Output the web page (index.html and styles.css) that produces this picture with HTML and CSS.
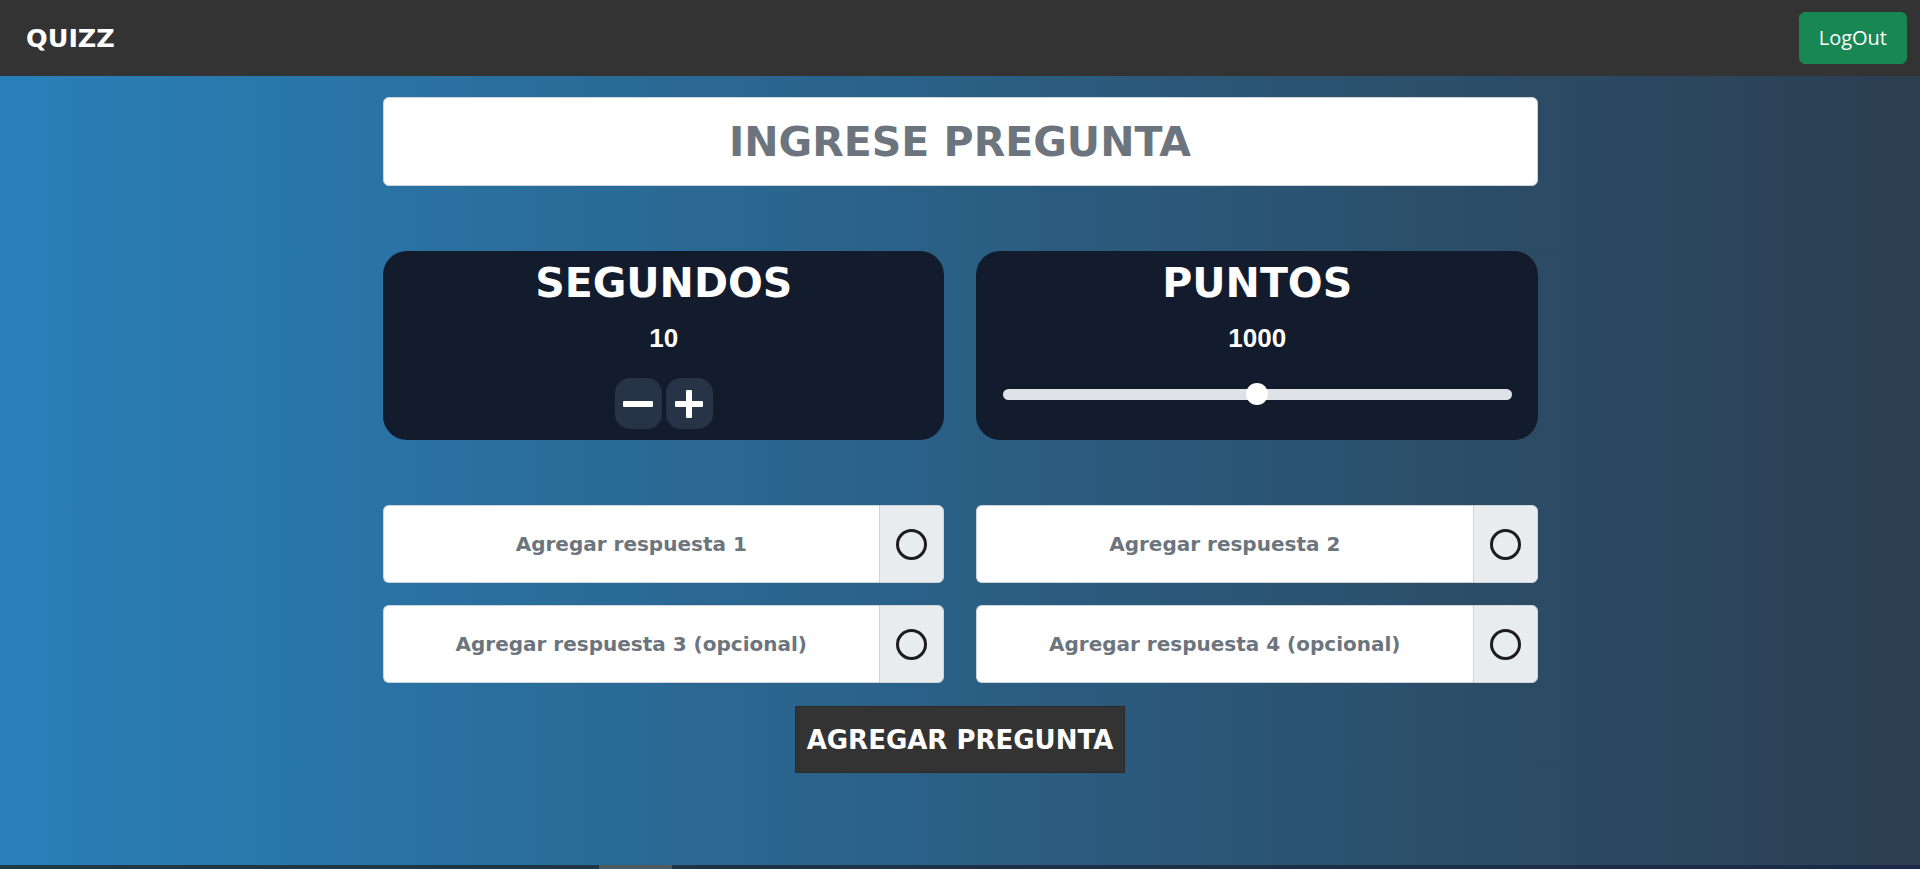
FILE: index.html
```html
<!DOCTYPE html>
<html lang="es">
<head>
    <meta charset="UTF-8">
    <meta name="viewport" content="width=device-width, initial-scale=1.0">
    <title>Quizz</title>
    <link rel="stylesheet" href="styles.css">
</head>
<body>
    <nav class="navbar">
        <span class="brand">QUIZZ</span>
        <button class="btn-logout">LogOut</button>
    </nav>

    <main class="main">
        <div class="container">
            <input type="text" class="question-input" placeholder="INGRESE PREGUNTA">

            <div class="settings">
                <div class="setting-card">
                    <h2 class="setting-title">SEGUNDOS</h2>
                    <div class="setting-value">10</div>
                    <div class="stepper">
                        <button class="step-btn" aria-label="menos">
                            <svg width="30" height="6" viewBox="0 0 30 6"><rect x="0" y="0" width="30" height="6" rx="1" fill="#fff"/></svg>
                        </button>
                        <button class="step-btn" aria-label="mas">
                            <svg width="28" height="28" viewBox="0 0 28 28"><rect x="0" y="11" width="28" height="6" rx="1" fill="#fff"/><rect x="11" y="0" width="6" height="28" rx="1" fill="#fff"/></svg>
                        </button>
                    </div>
                </div>
                <div class="setting-card">
                    <h2 class="setting-title">PUNTOS</h2>
                    <div class="setting-value">1000</div>
                    <input type="range" class="points-range" min="0" max="2000" step="100" value="1000">
                </div>
            </div>

            <div class="answers">
                <div class="answer">
                    <input type="text" class="answer-input" placeholder="Agregar respuesta 1">
                    <div class="answer-check"><input type="radio" name="correcta" class="answer-radio"></div>
                </div>
                <div class="answer">
                    <input type="text" class="answer-input" placeholder="Agregar respuesta 2">
                    <div class="answer-check"><input type="radio" name="correcta" class="answer-radio"></div>
                </div>
                <div class="answer">
                    <input type="text" class="answer-input" placeholder="Agregar respuesta 3 (opcional)">
                    <div class="answer-check"><input type="radio" name="correcta" class="answer-radio"></div>
                </div>
                <div class="answer">
                    <input type="text" class="answer-input" placeholder="Agregar respuesta 4 (opcional)">
                    <div class="answer-check"><input type="radio" name="correcta" class="answer-radio"></div>
                </div>
            </div>

            <div class="actions">
                <button class="btn-add">AGREGAR PREGUNTA</button>
            </div>
        </div>
    </main>

    <div class="scroll-strip"><div class="scroll-thumb"></div></div>
</body>
</html>
```

FILE: styles.css
```css
* {
    box-sizing: border-box;
}
body {
    margin: 0;
    height: 100vh;
    display: flex;
    flex-direction: column;
    font-family: "DejaVu Sans", sans-serif;
    overflow: hidden;
}
.navbar {
    height: 76px;
    flex-shrink: 0;
    background-color: #333;
    display: flex;
    justify-content: space-between;
    align-items: center;
    padding: 0 13px 0 26px;
}
.brand {
    color: #fff;
    font-weight: bold;
    font-size: 25.5px;
}
.btn-logout {
    background-color: #198754;
    color: #fff;
    border: 1px solid #198754;
    border-radius: 6px;
    font-family: "Open Sans", sans-serif;
    font-size: 20px;
    line-height: 30px;
    padding: 10px 19px;
    cursor: pointer;
}
.main {
    flex: 1;
    background: linear-gradient(to right, #2980b9, #2c3e50);
}
.container {
    width: 1155px;
    margin: 0 auto;
    padding-top: 21px;
}
.question-input {
    display: block;
    width: 100%;
    height: 89px;
    border: 1px solid #ced4da;
    border-radius: 6px;
    background: #fff;
    text-align: center;
    font-family: "DejaVu Sans", sans-serif;
    font-weight: bold;
    font-size: 41px;
    color: #495057;
}
.question-input::placeholder,
.answer-input::placeholder {
    color: #6c757d;
    opacity: 1;
}
.settings {
    margin-top: 65px;
    display: grid;
    grid-template-columns: 1fr 1fr;
    gap: 32px;
}
.setting-card {
    height: 189px;
    background-color: #131c2d;
    border-radius: 24px;
    color: #fff;
    display: flex;
    flex-direction: column;
    align-items: center;
    padding: 12px 26px 0 27px;
}
.setting-title {
    margin: 0;
    font-size: 41px;
    line-height: 1;
    font-weight: bold;
}
.setting-value {
    margin-top: 21px;
    font-family: "Liberation Sans", sans-serif;
    font-weight: bold;
    font-size: 26px;
    line-height: 1;
}
.stepper {
    margin-top: 27px;
    display: flex;
    gap: 4px;
}
.step-btn {
    width: 47px;
    height: 51px;
    border: none;
    border-radius: 15px;
    background-color: #273347;
    display: flex;
    align-items: center;
    justify-content: center;
    padding: 0;
    cursor: pointer;
}
.points-range {
    -webkit-appearance: none;
    appearance: none;
    width: 100%;
    height: 22px;
    margin: 32px 0 0;
    background: transparent;
}
.points-range::-webkit-slider-runnable-track {
    height: 11px;
    border-radius: 6px;
    background-color: #dee1e6;
}
.points-range::-webkit-slider-thumb {
    -webkit-appearance: none;
    width: 22px;
    height: 22px;
    margin-top: -5.5px;
    border-radius: 50%;
    background-color: #fff;
    border: none;
}
.answers {
    margin-top: 65px;
    display: grid;
    grid-template-columns: 1fr 1fr;
    column-gap: 32px;
    row-gap: 22px;
}
.answer {
    height: 78px;
    display: flex;
}
.answer-input {
    flex: 1;
    min-width: 0;
    border: 1px solid #ced4da;
    border-right: none;
    border-radius: 6px 0 0 6px;
    background: #fff;
    text-align: center;
    font-family: "DejaVu Sans", sans-serif;
    font-weight: bold;
    font-size: 20px;
    color: #495057;
}
.answer-check {
    width: 65px;
    background-color: #e9ecef;
    border: 1px solid #ced4da;
    border-radius: 0 6px 6px 0;
    display: flex;
    align-items: center;
    justify-content: center;
}
.answer-radio {
    -webkit-appearance: none;
    appearance: none;
    width: 31px;
    height: 31px;
    margin: 0;
    border: 3px solid #1d1d1f;
    border-radius: 50%;
    background-color: #e9ecef;
}
.actions {
    margin-top: 23px;
    display: flex;
    justify-content: center;
}
.btn-add {
    width: 330px;
    height: 67px;
    background-color: #333;
    border: 1px solid #2a2a2a;
    color: #fff;
    font-family: "DejaVu Sans", sans-serif;
    font-weight: bold;
    font-size: 26px;
    padding: 0;
    cursor: pointer;
}
.scroll-strip {
    height: 4px;
    flex-shrink: 0;
    background: linear-gradient(to right, #1e3a44, #1c2a48);
    padding-left: 599px;
}
.scroll-thumb {
    width: 73px;
    height: 4px;
    background-color: #4c5c62;
}
```
